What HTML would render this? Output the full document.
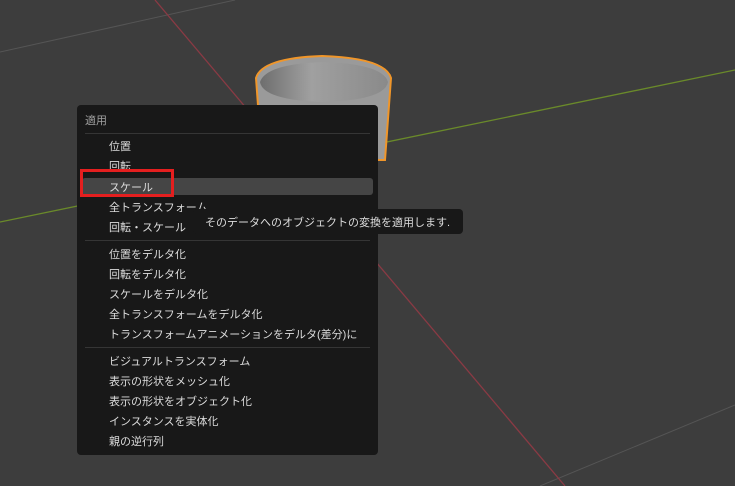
<!DOCTYPE html><html><head><meta charset="utf-8"><style>
body{margin:0;width:735px;height:486px;background:#3d3d3d;overflow:hidden;position:relative;font-family:"Liberation Sans","Noto Sans CJK JP",sans-serif}
#m{position:absolute;left:77px;top:105px;width:301px;height:350px;background:#181818;border-radius:4px}
.t{position:absolute;font-size:11px;color:#dcdcdc;white-space:nowrap;line-height:14px;margin-top:2px}
.s{position:absolute;left:8px;width:285px;height:1px;background:#353535}
</style></head><body>
<svg width="735" height="486" style="position:absolute;left:0;top:0">
<line x1="0" y1="52" x2="235" y2="0" stroke="#555" stroke-width="1"/>
<line x1="540" y1="486" x2="735" y2="405" stroke="#555" stroke-width="1"/>
<line x1="155" y1="0" x2="565" y2="486" stroke="#8a3a44" stroke-width="1.3"/>
<line x1="0" y1="222" x2="735" y2="70" stroke="#6a8a2a" stroke-width="1.3"/>
<defs><linearGradient id="g" x1="0" x2="1"><stop offset="0" stop-color="#6e6e6e"/><stop offset=".4" stop-color="#a0a0a0"/><stop offset="1" stop-color="#8a8a8a"/></linearGradient></defs>
<path d="M256 78 Q262 58 322 56 Q385 58 391 78 L385 160 L262 160 Z" fill="#9a9a9a" stroke="#f0962a" stroke-width="2"/>
<path d="M260 82 Q266 64 323 62 Q383 64 388 82 Q385 100 323 102 Q263 100 260 82 Z" fill="url(#g)"/>
</svg>
<div id="m">
<div class="t" style="left:8px;top:7px;color:#a0a0a0">適用</div>
<div class="s" style="top:28px"></div>
<div style="position:absolute;left:5px;top:73px;width:291px;height:17px;background:#454545;border-radius:3px"></div>
<div class="t" style="left:32px;top:33px">位置</div>
<div class="t" style="left:32px;top:53px">回転</div>
<div class="t" style="left:32px;top:74px">スケール</div>
<div class="t" style="left:32px;top:94px">全トランスフォーム</div>
<div class="t" style="left:32px;top:114px">回転・スケール</div>
<div class="s" style="top:135px"></div>
<div class="t" style="left:32px;top:141px">位置をデルタ化</div>
<div class="t" style="left:32px;top:161px">回転をデルタ化</div>
<div class="t" style="left:32px;top:181px">スケールをデルタ化</div>
<div class="t" style="left:32px;top:201px">全トランスフォームをデルタ化</div>
<div class="t" style="left:32px;top:221px">トランスフォームアニメーションをデルタ(差分)に</div>
<div class="s" style="top:242px"></div>
<div class="t" style="left:32px;top:248px">ビジュアルトランスフォーム</div>
<div class="t" style="left:32px;top:268px">表示の形状をメッシュ化</div>
<div class="t" style="left:32px;top:288px">表示の形状をオブジェクト化</div>
<div class="t" style="left:32px;top:308px">インスタンスを実体化</div>
<div class="t" style="left:32px;top:328px">親の逆行列</div>
</div>
<div style="position:absolute;left:80px;top:169px;width:88px;height:22px;border:3px solid #e41f1f"></div>
<div style="position:absolute;left:193px;top:209px;width:270px;height:25px;background:#181818;border-radius:4px"></div>
<div class="t" style="left:205px;top:214px">そのデータへのオブジェクトの変換を適用します.</div>
</body></html>
